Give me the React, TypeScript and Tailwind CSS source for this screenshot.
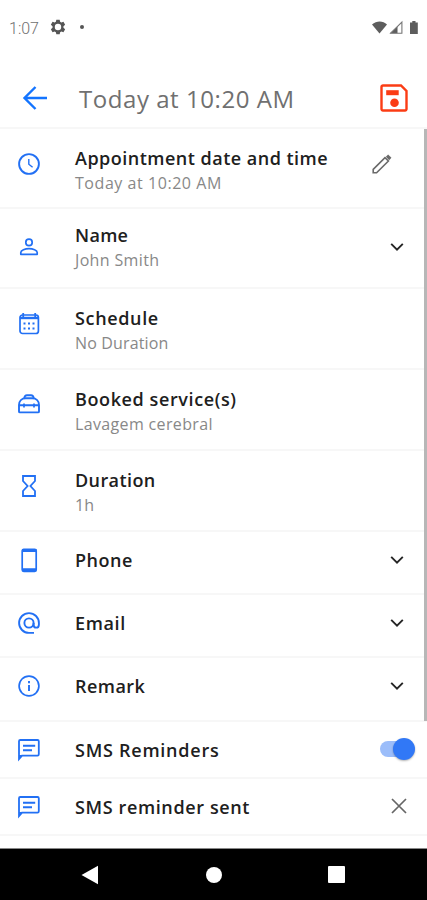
import type { ReactNode } from "react";

const BLUE = "#2270f4";

function Icon({ children }: { children: ReactNode }) {
  return (
    <svg viewBox="0 0 26 26" className="block h-[26px] w-[26px] shrink-0" fill="none" stroke={BLUE} strokeWidth="1.9">
      {children}
    </svg>
  );
}

const clock = (
  <Icon>
    <circle cx="13" cy="13" r="9.9" />
    <path d="M12.8 8v5.2l3.8 3.1" strokeWidth="1.4" />
  </Icon>
);
const person = (
  <Icon>
    <circle cx="13" cy="8.4" r="3.2" strokeWidth="1.7" />
    <path d="M4.8 20.3v-1.8c0-2.2 4.3-3.8 8.2-3.8s8.2 1.6 8.2 3.8v1.8z" strokeWidth="1.7" strokeLinejoin="round" />
  </Icon>
);
const calendar = (
  <Icon>
    <rect x="4" y="4" width="18.4" height="18.5" rx="2.5" strokeWidth="1.7" />
    <path d="M4 7h18.5" strokeWidth="2.4" />
    <path d="M7.2 2v4M19.200 2v4" strokeWidth="1.8" />
    <path d="M7.500 12.500h2M12 12.500h2M16.500 12.500h2M7.500 17.500h2M12 17.500h2M16.500 17.500h2" strokeWidth="2" />
  </Icon>
);
const bag = (
  <Icon>
    <path d="M3 20.4V14c0-4 2.8-6.8 6.8-6.8h6.4c4 0 6.8 2.8 6.8 6.8v6.4a1 1 0 0 1-1 1H4a1 1 0 0 1-1-1z" strokeWidth="1.9" />
    <path d="M8.3 7.2C8.5 5.2 9.6 4.2 11 4.2h4c1.4 0 2.5 1 2.7 3M3 14.3h20" strokeWidth="1.9" />
    <path d="M8 12.6v4M18 12.6v4" strokeWidth="1.7" />
  </Icon>
);
const hourglass = (
  <Icon>
    <path d="M7 3h12v5l-4.6 5 4.6 5v5H7v-5l4.6-5L7 8z" strokeWidth="1.8" />
  </Icon>
);
const phone = (
  <Icon>
    <rect x="6.2" y="2.3" width="14" height="22" rx="1.5" strokeWidth="1.7" />
    <path d="M6 3.6h14.5M6 22.8h14.5" strokeWidth="3" />
  </Icon>
);
const at = (
  <Icon>
    <circle cx="13" cy="13" r="4.6" />
    <path d="M18 22.9h-5a9.9 9.9 0 1 1 9.9-9.9v1.4c0 4.3-5.3 4.3-5.3 0V13" />
  </Icon>
);
const info = (
  <Icon>
    <circle cx="13" cy="13" r="9.9" strokeWidth="1.7" />
    <path d="M13 12v6M13 8v2.2" strokeWidth="1.9" />
  </Icon>
);
const message = (
  <Icon>
    <path d="M3 22V4.3A1.3 1.3 0 0 1 4.3 3h17.200a1.300 1.300 0 0 1 1.300 1.300v13a1.300 1.300 0 0 1-1.300 1.300H6z" strokeWidth="1.8" />
    <path d="M3 18h3.500L3 22z" fill={BLUE} stroke="none" />
    <path d="M7 8.800h12.200M7 13.200h9" />
  </Icon>
);
const chevron = (
  <svg viewBox="0 0 16 16" className="mr-[22px] block h-4 w-4" fill="none" stroke="#252525" strokeWidth="1.9">
    <path d="m2.2 4.9 5.8 5.8 5.8-5.8" />
  </svg>
);
const pencil = (
  <svg viewBox="0 0 24 24" className="mr-[33px] block h-6 w-6" fill="none" stroke="#6a6a6a" strokeWidth="1.6">
    <path d="M3.2 20.8v-3.4L15 5.6l3.4 3.4L6.6 20.8z" />
    <path d="m17 3.7 3.3 3.3" strokeWidth="3.2" />
  </svg>
);
const toggle = (
  <div className="relative mr-[12px] h-[22px] w-[35px]">
    <div className="h-[16px] w-[30px] translate-y-[3px] rounded-full bg-[#9bbdfa]" />
    <div className="absolute right-0 top-0 h-[22px] w-[22px] rounded-full bg-[#3178f6] shadow-[0_1px_2px_rgba(0,0,0,0.3)]" />
  </div>
);
const cross = (
  <svg viewBox="0 0 16 16" className="mr-[20px] block h-4 w-4" stroke="#666" strokeWidth="1.7">
    <path d="m1 1 14 14M15 1 1 15" />
  </svg>
);

type RowData = {
  title: string;
  sub?: string;
  icon: ReactNode;
  action?: ReactNode;
  row: string;
  iconPad: string;
  actionPad?: string;
  titleSpacing: string;
  subSpacing?: string;
};

const rows: RowData[] = [
  { title: "Appointment date and time", sub: "Today at 10:20 AM", icon: clock, action: pencil, row: "h-[80px] pt-[17px]", iconPad: "pt-[5px]", actionPad: "pt-[6px]", titleSpacing: "tracking-[0.49px]", subSpacing: "tracking-[0.55px]" },
  { title: "Name", sub: "John Smith", icon: person, action: chevron, row: "h-[80px] pt-[14px]", iconPad: "pt-[11px]", actionPad: "pt-[16px]", titleSpacing: "tracking-[0.3px]", subSpacing: "tracking-[0.35px]" },
  { title: "Schedule", sub: "No Duration", icon: calendar, row: "h-[81px] pt-[17px]", iconPad: "pt-[5px]", titleSpacing: "tracking-[0.65px]", subSpacing: "tracking-[0.15px]" },
  { title: "Booked service(s)", sub: "Lavagem cerebral", icon: bag, row: "h-[81px] pt-[17px]", iconPad: "pt-[4px]", titleSpacing: "tracking-[0.6px]", subSpacing: "tracking-[0.35px]" },
  { title: "Duration", sub: "1h", icon: hourglass, row: "h-[81px] pt-[17px]", iconPad: "pt-[5px]", titleSpacing: "tracking-[0.4px]", subSpacing: "tracking-[0.2px]" },
  { title: "Phone", icon: phone, action: chevron, row: "h-[63px] pt-[15px]", iconPad: "", actionPad: "pt-[5px]", titleSpacing: "tracking-[0.5px]" },
  { title: "Email", icon: at, action: chevron, row: "h-[63px] pt-[15px]", iconPad: "", actionPad: "pt-[5px]", titleSpacing: "tracking-[0.65px]" },
  { title: "Remark", icon: info, action: chevron, row: "h-[64px] pt-[15px]", iconPad: "", actionPad: "pt-[5px]", titleSpacing: "tracking-[0.45px]" },
  { title: "SMS Reminders", icon: message, action: toggle, row: "h-[57px] pt-[15px]", iconPad: "", actionPad: "pt-px", titleSpacing: "tracking-[0.75px]" },
  { title: "SMS reminder sent", icon: message, action: cross, row: "h-[57px] pt-[15px]", iconPad: "", actionPad: "pt-[4px]", titleSpacing: "tracking-[0.62px]" },
];

function Row(r: RowData) {
  const titleHeight = r.sub ? "h-[25px] leading-[25px]" : "h-[27px] leading-[27px]";
  return (
    <div className={`flex items-start border-b-2 border-[#f7f7f7] ${r.row}`}>
      <div className={`w-[75px] shrink-0 pl-4 ${r.iconPad}`}>{r.icon}</div>
      <div className="flex-1 whitespace-nowrap">
        <div className={`text-[18px] font-semibold text-[#202020] ${titleHeight}`}><span className={r.titleSpacing}>{r.title}</span></div>
        {r.sub && <div className="h-[25px] text-[16px] leading-[25px] font-normal text-[#888]"><span className={r.subSpacing}>{r.sub}</span></div>}
      </div>
      <div className={r.actionPad}>{r.action}</div>
    </div>
  );
}

export default function App() {
  return (
    <div className="relative flex h-[900px] w-[427px] flex-col overflow-hidden bg-white font-['Open_Sans','Noto_Sans',sans-serif]">
      <div className="flex h-[54px] shrink-0 items-center pl-[9px] pr-[6px]">
        <span className="w-[41px] pt-[3px] font-['Roboto',sans-serif] text-[16px] font-light text-[#707070]">1:07</span>
        <svg viewBox="0 0 24 24" className="h-4 w-4" fill="#555" fillRule="evenodd">
          <path d="M9.500 1h5l.7 3.300 1.800 1 3.200-1L22.700 8.600l-2.500 2.300v2.200l2.500 2.300-2.500 4.300-3.200-1-1.800 1-.7 3.300h-5l-.7-3.300-1.800-1-3.200 1-2.500-4.300 2.500-2.300v-2.200L1.300 8.600l2.500-4.300 3.200 1 1.800-1zM12 7.200a4.800 4.800 0 1 0 0 9.600 4.800 4.800 0 0 0 0-9.600z" />
        </svg>
        <div className="ml-[14px] h-1 w-1 rounded-full bg-[#555]" />
        <svg viewBox="0 0 48 16" className="ml-auto mt-[1px] h-4 w-[50px]" fill="#5d5d5d">
          <path d="M0 4.400C4.500.4 11 .4 15 4.400L7.500 13.500z" />
          <path d="M18 13.200h7.500v-7z" />
          <path d="M18.700 13.200 29.900 2v11.200z" fill="none" stroke="#777" strokeWidth="1.1" />
          <path d="M38 2.500h2.300V1h3.200v1.500h2.300V14H38z" />
        </svg>
      </div>
      <header className="flex h-[75px] shrink-0 items-center border-b-2 border-[#f7f7f7] pt-[15px] pl-[22px]">
        <svg viewBox="0 0 26 26" className="h-[26px] w-[26px]" fill="none" stroke="#1374ff" strokeWidth="2.4">
          <path d="M25 13H2.500M13.500 2 2.500 13l11 11" />
        </svg>
        <h1 className="ml-[31px] whitespace-nowrap pt-px text-[24px] leading-8 font-medium text-[#707070]"><span className="tracking-[0.55px]">Today at 10:20 AM</span></h1>
        <svg viewBox="0 0 28 28" className="ml-auto mr-[19px] h-7 w-7" fill="none" stroke="#fb3c14" strokeWidth="2.4">
          <path d="M3 1.500h18l5.500 5.500v18a1.500 1.500 0 0 1-1.500 1.500H3A1.500 1.500 0 0 1 1.500 25V3A1.500 1.500 0 0 1 3 1.500z" />
          <path d="M6.200 6.200h12.500v5H6.200z" fill="#fb3c14" stroke="none" />
          <circle cx="14.500" cy="18.800" r="4.300" fill="#fb3c14" stroke="none" />
        </svg>
      </header>
      <main className="flex-1 overflow-hidden">
        {rows.map((r) => <Row key={r.title} {...r} />)}
      </main>
      <div className="absolute right-0 top-[129px] h-[592px] w-[3.5px] bg-[#b7b7b7]" />
      <nav className="flex h-[52px] shrink-0 items-center border-t border-[#888] bg-black pl-[81px]">
        <svg viewBox="0 0 17 20" className="h-5 w-[17px]" fill="#fff"><path d="M.5 10 17 .8v18.400z" /></svg>
        <div className="ml-[108px] h-4 w-4 rounded-full bg-white" />
        <div className="ml-[106px] h-[17px] w-[17px] rounded-[1px] bg-white" />
      </nav>
    </div>
  );
}
